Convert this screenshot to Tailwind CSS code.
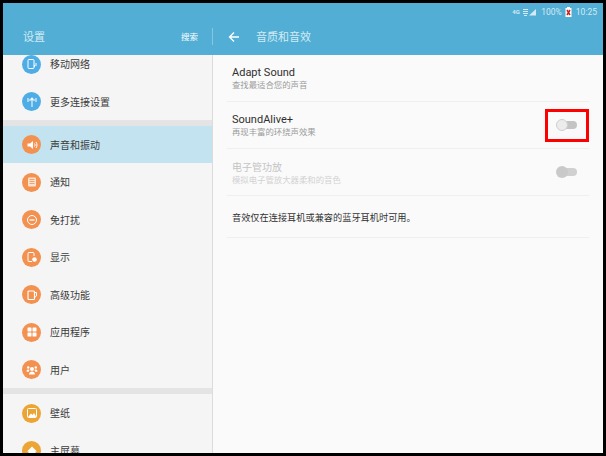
<!DOCTYPE html>
<html lang="zh-CN">
<head>
  <meta charset="UTF-8" />
  <title>音质和音效</title>
  <script src="https://cdn.jsdelivr.net/npm/@tailwindcss/browser@4"></script>
</head>
<body class="bg-black w-[606px] h-[456px] overflow-hidden font-['Roboto','Noto_Sans_CJK_SC',sans-serif]">
  <div class="relative mt-[3px] ml-[3px] w-[600px] h-[450px] flex flex-col overflow-hidden bg-[#fafafa]">
    <!-- Header -->
    <header class="h-[52px] shrink-0 bg-[#52aed4] flex flex-col text-white">
      <div class="h-[16px] flex items-center justify-end gap-[3px] pr-[6px] pt-[2px] text-[8.5px] text-[#d3ebf5]">
        <span class="text-[6px] leading-[6px] w-[8px] font-bold">4G</span>
        <svg width="13" height="8" viewBox="0 0 13 8" class="mr-[2px]">
          <path d="M0 1h5v1H0zM0 3h5v1H0zM0 5h5v1H0zM1 7h3v1H1z" fill="#d3ebf5"/>
          <path d="M6 7.500 13 1v6.500z" fill="#d3ebf5"/>
        </svg>
        <span>100%</span>
        <svg width="7" height="10" viewBox="0 0 7 10">
          <rect x="2" y="0" width="3" height="1" fill="#fff"/>
          <rect x="0.500" y="1" width="6" height="9" fill="#fff"/>
          <path d="M2 3l3 5M5 3 2 8" stroke="#c8261c" stroke-width="1.500"/>
        </svg>
        <span class="ml-[1px]">10:25</span>
      </div>
      <div class="flex-1 flex items-center pb-[1px]">
        <div class="w-[209px] flex items-center justify-between pl-[20px] pr-[14px]">
          <span class="text-[11px] pt-[3px] text-[#d3ebf5]">设置</span>
          <span class="text-[8.5px] pt-[2px]">搜索</span>
        </div>
        <div class="w-px h-[17px] bg-white/30"></div>
        <svg width="12" height="12" viewBox="0 0 12 12" fill="none" stroke="#fff" stroke-width="1.300" class="ml-[15px]">
          <path d="M11 6H2M6 1.500 1.500 6 6 10.500"/>
        </svg>
        <span class="ml-[16px] text-[11px] pt-[3px] text-[#d3ebf5]">音质和音效</span>
      </div>
    </header>

    <div class="flex-1 flex min-h-0">
      <!-- Sidebar -->
      <aside class="w-[210px] shrink-0 bg-[#f5f5f5] border-r border-[#dcdcdc] overflow-hidden text-[10px] text-[#3c3c3c]">
        <div class="-mt-[10px]">
          <div class="h-[38px] flex items-center pl-[19px] gap-[9px]">
            <span class="w-[19px] h-[19px] rounded-full bg-[#4fade6] flex items-center justify-center">
              <svg width="12" height="12" viewBox="0 0 12 12" fill="none" stroke="#fff"><rect x="2" y="1.500" width="6" height="9" rx="1"/><path d="M10 5v3M8.500 7v2" /></svg>
            </span>
            <span class="pt-[1px]">移动网络</span>
          </div>
          <div class="h-[37px] flex items-center pl-[19px] gap-[9px]">
            <span class="w-[19px] h-[19px] rounded-full bg-[#4fade6] flex items-center justify-center">
              <svg width="12" height="12" viewBox="0 0 12 12" fill="none" stroke="#fff"><path d="M6 4v7M2 2v4M10 2v4M4 3v2M8 3v2"/><circle cx="6" cy="3" r="1" fill="#fff"/></svg>
            </span>
            <span class="pt-[2px]">更多连接设置</span>
          </div>
          <div class="h-[6px] bg-[#e4e4e4]"></div>
          <div class="h-[37px] bg-[#c3e3f0] flex items-center pl-[19px] gap-[9px]">
            <span class="w-[19px] h-[19px] rounded-full bg-[#f29150] flex items-center justify-center">
              <svg width="12" height="12" viewBox="0 0 12 12" fill="none" stroke="#fff"><path d="M1.500 4.500H4L7 2v8L4 7.500H1.500z" fill="#fff" stroke="none"/><path d="M8.500 4.500c.7 1 .7 2 0 3M10 3c1.300 2 1.300 4 0 6"/></svg>
            </span>
            <span class="pt-[2px]">声音和振动</span>
          </div>
          <div class="h-[38px] flex items-center pl-[19px] gap-[9px]">
            <span class="w-[19px] h-[19px] rounded-full bg-[#f29150] flex items-center justify-center">
              <svg width="12" height="12" viewBox="0 0 12 12"><rect x="2" y="1.500" width="8" height="9" rx="1" fill="#fbe3d2"/><path d="M3.500 3.500h5M3.500 5.500h5M3.500 7.500h5" stroke="#f29150" stroke-width=".8"/></svg>
            </span>
            <span class="pt-[1px]">通知</span>
          </div>
          <div class="h-[37px] flex items-center pl-[19px] gap-[9px]">
            <span class="w-[19px] h-[19px] rounded-full bg-[#f29150] flex items-center justify-center">
              <svg width="12" height="12" viewBox="0 0 12 12" fill="none" stroke="#fff"><circle cx="6" cy="6" r="4.500"/><path d="M3.500 6h5" stroke-width="1.300"/></svg>
            </span>
            <span class="pt-[2px]">免打扰</span>
          </div>
          <div class="h-[38px] flex items-center pl-[19px] gap-[9px]">
            <span class="w-[19px] h-[19px] rounded-full bg-[#f29150] flex items-center justify-center">
              <svg width="12" height="12" viewBox="0 0 12 12" fill="none" stroke="#fff"><path d="M6 10.500H3a1 1 0 0 1-1-1v-7a1 1 0 0 1 1-1h4a1 1 0 0 1 1 1V5"/><circle cx="8.500" cy="8.500" r="2.300" fill="#fff" stroke="none"/></svg>
            </span>
            <span class="pt-[1px]">显示</span>
          </div>
          <div class="h-[37px] flex items-center pl-[19px] gap-[9px]">
            <span class="w-[19px] h-[19px] rounded-full bg-[#f29150] flex items-center justify-center">
              <svg width="12" height="12" viewBox="0 0 12 12" fill="none" stroke="#fff"><rect x="2" y="2" width="6.500" height="8.500" rx="1" stroke-width="1.200"/><path d="M8.500 3.500H10.500V7L8.500 8.500"/></svg>
            </span>
            <span class="pt-[2px]">高级功能</span>
          </div>
          <div class="h-[38px] flex items-center pl-[19px] gap-[9px]">
            <span class="w-[19px] h-[19px] rounded-full bg-[#f29150] flex items-center justify-center">
              <svg width="12" height="12" viewBox="0 0 12 12" fill="#fff"><rect x="1.500" y="1.500" width="4" height="4" rx=".5"/><rect x="6.500" y="1.500" width="4" height="4" rx=".5"/><rect x="1.500" y="6.500" width="4" height="4" rx=".5"/><rect x="6.500" y="6.500" width="4" height="4" rx=".5"/></svg>
            </span>
            <span class="pt-[1px]">应用程序</span>
          </div>
          <div class="h-[37px] flex items-center pl-[19px] gap-[9px]">
            <span class="w-[19px] h-[19px] rounded-full bg-[#f29150] flex items-center justify-center">
              <svg width="12" height="12" viewBox="0 0 12 12" fill="#fff"><circle cx="6" cy="5" r="2"/><path d="M3 10.500c0-4 6-4 6 0z"/><circle cx="2.200" cy="3.500" r="1.200"/><circle cx="9.800" cy="3.500" r="1.200"/><path d="M.5 7.500c0-2 2-2.500 3-1.500L2.500 8zM11.500 7.500c0-2-2-2.500-3-1.500l1 2z"/></svg>
            </span>
            <span class="pt-[2px]">用户</span>
          </div>
          <div class="h-[6px] bg-[#e4e4e4]"></div>
          <div class="h-[38px] flex items-center pl-[19px] gap-[9px]">
            <span class="w-[19px] h-[19px] rounded-full bg-[#eca534] flex items-center justify-center">
              <svg width="12" height="12" viewBox="0 0 12 12" fill="none" stroke="#fff"><rect x="1.500" y="1.500" width="9" height="9" rx="1"/><path d="M2 10l3-3.500 1.500 1.500L8 6l2.500 4z" fill="#fff" stroke="none"/></svg>
            </span>
            <span class="pt-[1px]">壁纸</span>
          </div>
          <div class="h-[37px] flex items-center pl-[19px] gap-[9px]">
            <span class="w-[19px] h-[19px] rounded-full bg-[#eca534] flex items-center justify-center">
              <svg width="12" height="12" viewBox="0 0 12 12" fill="#fff"><path d="M6 1.500 11 6.500H9.500V10.500H2.500V6.500H1z"/></svg>
            </span>
            <span class="pt-[2px]">主屏幕</span>
          </div>
        </div>
      </aside>

      <!-- Detail pane -->
      <main class="flex-1 px-[14px] bg-[#fafafa]">
        <div class="h-[47px] border-b border-[#efefef] pl-[5px] pt-[11px]">
          <p class="text-[11px] leading-[13px] text-[#2f2f2f]">Adapt Sound</p>
          <p class="text-[8.4px] leading-[13px] text-[#9a9a9a]">查找最适合您的声音</p>
        </div>
        <div class="h-[47px] border-b border-[#efefef] pl-[5px] pr-[12px] flex items-center justify-between">
          <div class="pt-[2px]">
            <p class="text-[11px] leading-[13px] text-[#2f2f2f]">SoundAlive+</p>
            <p class="text-[8.4px] leading-[13px] text-[#9a9a9a]">再现丰富的环绕声效果</p>
          </div>
          <div class="w-[21px] h-[12px] relative">
            <div class="absolute right-0 top-[2px] w-[16px] h-[8px] rounded-full bg-[#c4c4c4]"></div>
            <div class="absolute left-0 top-0 w-[12px] h-[12px] rounded-full bg-[#ececec] border border-[#cfcfcf]"></div>
          </div>
        </div>
        <div class="h-[47px] border-b border-[#efefef] pl-[5px] pr-[12px] flex items-center justify-between">
          <div class="pt-[3px]">
            <p class="text-[10px] leading-[13px] text-[#c4c4c4]">电子管功放</p>
            <p class="text-[8.4px] leading-[13px] text-[#d2d2d2]">模拟电子管放大器柔和的音色</p>
          </div>
          <div class="w-[21px] h-[12px] relative">
            <div class="absolute right-0 top-[2px] w-[16px] h-[8px] rounded-full bg-[#d0d0d0]"></div>
            <div class="absolute left-0 top-0 w-[12px] h-[12px] rounded-full bg-[#c9c9c9]"></div>
          </div>
        </div>
        <div class="h-[42px] border-b border-[#efefef] pl-[5px] pt-[2px] flex items-center text-[9.2px] text-[#333]">
          音效仅在连接耳机或兼容的蓝牙耳机时可用。
        </div>
      </main>
    </div>

    <!-- Red highlight added over the screenshot -->
    <div class="absolute left-[542px] top-[106px] w-[44px] h-[33px] border-[3px] border-[#ff0000]"></div>
  </div>
</body>
</html>
